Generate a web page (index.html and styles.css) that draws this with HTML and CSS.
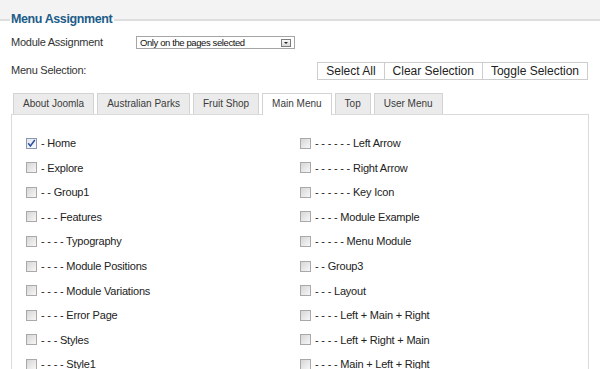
FILE: index.html
```html
<!DOCTYPE html>
<html lang="en">
<head>
  <meta charset="UTF-8">
  <title>Menu Assignment</title>
  <link rel="stylesheet" href="styles.css">
</head>
<body>
  <div class="legend-row">
    <span class="rule short"></span>
    <h2 class="legend">Menu Assignment</h2>
    <span class="rule"></span>
  </div>

  <div class="content">
    <div class="field-row">
      <span class="label">Module Assignment</span>
      <div class="select">
        <span>Only on the pages selected</span>
        <span class="select-btn"><i></i></span>
      </div>
    </div>

    <div class="selection-row">
      <span class="label">Menu Selection:</span>
      <div class="btn-group">
        <button>Select All</button>
        <button>Clear Selection</button>
        <button>Toggle Selection</button>
      </div>
    </div>

    <ul class="tabs">
      <li>About Joomla</li>
      <li>Australian Parks</li>
      <li>Fruit Shop</li>
      <li class="active">Main Menu</li>
      <li>Top</li>
      <li>User Menu</li>
    </ul>

    <div class="panel">
      <div class="items">
        <label class="item"><span class="box checked"><svg width="9" height="9" viewBox="0 0 9 9"><path d="M1.2 4.3 L3.4 7 L7.8 1" fill="none" stroke="#2c4fa3" stroke-width="1.5"/></svg></span>- Home</label>
        <label class="item"><span class="box"></span>- - - - - - Left Arrow</label>
        <label class="item"><span class="box"></span>- Explore</label>
        <label class="item"><span class="box"></span>- - - - - - Right Arrow</label>
        <label class="item"><span class="box"></span>- - Group1</label>
        <label class="item"><span class="box"></span>- - - - - - Key Icon</label>
        <label class="item"><span class="box"></span>- - - Features</label>
        <label class="item"><span class="box"></span>- - - - Module Example</label>
        <label class="item"><span class="box"></span>- - - - Typography</label>
        <label class="item"><span class="box"></span>- - - - - Menu Module</label>
        <label class="item"><span class="box"></span>- - - - Module Positions</label>
        <label class="item"><span class="box"></span>- - Group3</label>
        <label class="item"><span class="box"></span>- - - - Module Variations</label>
        <label class="item"><span class="box"></span>- - - Layout</label>
        <label class="item"><span class="box"></span>- - - - Error Page</label>
        <label class="item"><span class="box"></span>- - - - Left + Main + Right</label>
        <label class="item"><span class="box"></span>- - - Styles</label>
        <label class="item"><span class="box"></span>- - - - Left + Right + Main</label>
        <label class="item"><span class="box"></span>- - - - Style1</label>
        <label class="item"><span class="box"></span>- - - - Main + Left + Right</label>
      </div>
    </div>
  </div>
</body>
</html>
```

FILE: styles.css
```css
/* Basic Reset */
* {
  margin: 0;
  padding: 0;
  box-sizing: border-box;
}

body {
  font-family: "Liberation Sans", Arial, sans-serif;
  font-size: 11px;
  color: #333;
  background: #fff;
  overflow: hidden;
}

/* Legend header: grey band, rule broken by the title */
.legend-row {
  display: flex;
  height: 26px;
  background: linear-gradient(#f3f3f3 0, #f3f3f3 19px, #fff 19px);
}

.rule {
  flex: 1;
  background: linear-gradient(transparent 19px, #dedede 19px, #dedede 21px, transparent 21px);
}

.rule.short {
  flex: 0 0 10px;
}

.legend {
  padding: 12px 2px 0 1px;
  font-size: 12.5px;
  line-height: 14px;
  font-weight: bold;
  letter-spacing: -0.4px;
  color: #215c89;
}

.content {
  padding: 0 11px;
}

.label {
  font-size: 11px;
  letter-spacing: -0.25px;
  color: #333;
}

.field-row {
  display: flex;
  align-items: center;
  margin-top: 9px;
  height: 14px;
}

.field-row .label {
  width: 125px;
}

.select {
  display: flex;
  align-items: center;
  justify-content: space-between;
  width: 159px;
  height: 13px;
  margin-top: 1px;
  border: 1px solid #a5a5a5;
  padding: 0 3px 0 3px;
  font-size: 9.5px;
  letter-spacing: -0.4px;
  color: #111;
}

.select-btn {
  display: flex;
  align-items: center;
  justify-content: center;
  width: 10px;
  height: 8px;
  border: 1px solid #7c7c7c;
  background: linear-gradient(#fafafa, #d8d8d8);
}

.select-btn i {
  width: 0;
  height: 0;
  border-left: 2px solid transparent;
  border-right: 2px solid transparent;
  border-top: 2px solid #222;
  margin-top: 1px;
}

.selection-row {
  display: flex;
  justify-content: space-between;
  align-items: center;
  margin-top: 13px;
}

.selection-row .label {
  margin-top: -3px;
}

.btn-group {
  display: flex;
  margin-right: 1px;
}

.btn-group button {
  font-family: "Liberation Sans", Arial, sans-serif;
  font-size: 12px;
  color: #222;
  background: #fff;
  border: 1px solid #cdcdcd;
  height: 18px;
  line-height: 16px;
  padding: 0 8px;
  margin-left: -1px;
}

.tabs {
  list-style: none;
  display: flex;
  gap: 3px;
  margin-top: 13px;
  padding-left: 2px;
  position: relative;
  z-index: 1;
}

.tabs li {
  height: 21px;
  line-height: 20px;
  padding: 0 9px;
  font-size: 10px;
  color: #3a3a3a;
  background: #ebebeb;
  border: 1px solid #d3d3d3;
  border-bottom: none;
}

.tabs li.active {
  background: #fff;
  height: 22px;
  margin-bottom: -1px;
}

.panel {
  border: 1px solid #dadada;
  border-bottom: none;
  padding: 16px 0 0 14px;
  height: 260px;
}

.items {
  display: grid;
  grid-template-columns: 274px 1fr;
  grid-auto-rows: 24.56px;
}

.item {
  display: flex;
  align-items: center;
  font-size: 11px;
  letter-spacing: -0.2px;
  color: #222;
}

.box {
  display: inline-flex;
  align-items: center;
  justify-content: center;
  width: 11px;
  height: 11px;
  margin-right: 4px;
  border: 1px solid #a9a9a9;
  background: linear-gradient(135deg, #d6d6d6, #f7f7f7);
}

.box.checked {
  background: linear-gradient(135deg, #e2e6ee, #fbfbfb);
  border-color: #8d98b0;
}
```
